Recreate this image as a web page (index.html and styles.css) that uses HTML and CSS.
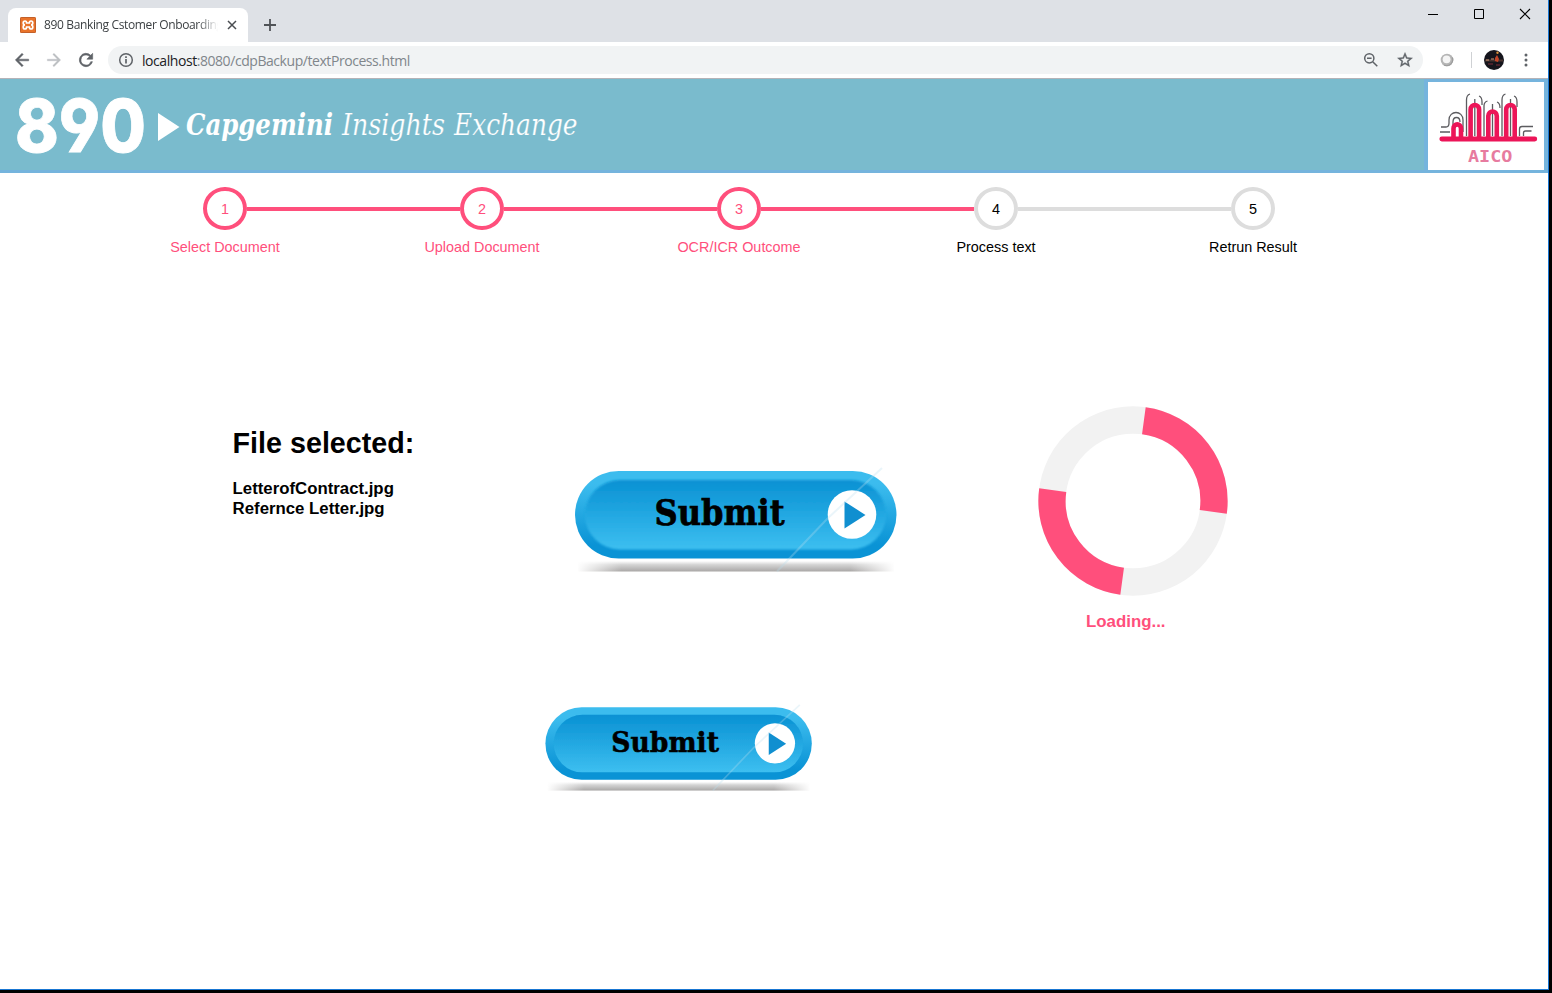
FILE: index.html
```html
<!DOCTYPE html>
<html lang="en">
<head>
<meta charset="utf-8">
<title>890 Banking Cstomer Onboarding</title>
<link rel="stylesheet" href="styles.css">
</head>
<body>
<svg class="defs" aria-hidden="true">
  <defs>
    <linearGradient id="rim" x1="0" y1="0" x2="0" y2="1"><stop offset="0" stop-color="#3cbcee"/><stop offset=".15" stop-color="#3cbcee"/><stop offset=".85" stop-color="#0a93d5"/><stop offset="1" stop-color="#0a93d5"/></linearGradient>
    <linearGradient id="face" x1="0" y1="0" x2="0" y2="1"><stop offset="0" stop-color="#0991d3"/><stop offset="1" stop-color="#3dbff0"/></linearGradient>
    <linearGradient id="shade" x1="0" y1="0" x2="0" y2="1"><stop offset="0" stop-color="#fff"/><stop offset=".35" stop-color="#d4d4d4"/><stop offset="1" stop-color="#a9a7a6"/></linearGradient>
    <linearGradient id="fade" x1="0" y1="0" x2="1" y2="0"><stop offset="0" stop-color="#fff"/><stop offset=".14" stop-color="#fff" stop-opacity="0"/><stop offset=".86" stop-color="#fff" stop-opacity="0"/><stop offset="1" stop-color="#fff"/></linearGradient>
    <filter id="soft" x="-5%" y="-10%" width="110%" height="120%"><feGaussianBlur stdDeviation=".9"/></filter>
    <symbol id="submit" viewBox="0 0 350 130">
      <rect x="18" y="106" width="316" height="10.500" fill="url(#shade)"/>
      <rect x="17" y="104" width="318" height="13" fill="url(#fade)"/>
      <rect x="15" y="16" width="321.500" height="87.500" rx="43.750" fill="url(#rim)"/>
      <rect x="25" y="25" width="301" height="69.500" rx="34.750" fill="url(#face)" filter="url(#soft)"/>
      <text x="94.500" y="69.800" class="submit-text" textLength="130" lengthAdjust="spacingAndGlyphs">Submit</text>
      <circle cx="292" cy="59.500" r="24.300" fill="#fff"/>
      <path d="M284.500 46.500v27l21-13.500z" fill="#108fd0"/>
      <path d="M217 116.500 267 64l55-51" fill="none" stroke="#b9dff0" stroke-width="2" opacity=".3"/>
    </symbol>
  </defs>
</svg>
<div class="window">
  <div class="tabstrip">
    <div class="tab">
      <svg class="favicon" viewBox="0 0 16 16"><rect width="16" height="16" rx="1.500" fill="#e9732a"/><rect x=".5" y=".5" width="15" height="15" rx="1" fill="none" stroke="#c2602a"/><path d="M5 7.900C2.600 7.900 2.600 4 5 4c1.300 0 1.600 1 1.600 2h2.800c0-1 .3-2 1.600-2 2.400 0 2.400 3.900 0 3.900 2.400 0 2.400 4.100 0 4.100-1.300 0-1.600-1-1.600-2H6.600c0 1-.3 2-1.600 2-2.400 0-2.400-4.100 0-4.100z" fill="none" stroke="#fff" stroke-width="1.700"/></svg>
      <span class="tab-title">890 Banking Cstomer Onboarding</span>
      <svg class="tab-close" viewBox="0 0 10 10"><path d="m1 1 8 8M9 1 1 9" stroke="#4a4d51" stroke-width="1.500"/></svg>
    </div>
    <svg class="new-tab" viewBox="0 0 12 12"><path d="M6 0v12M0 6h12" stroke="#505357" stroke-width="1.800"/></svg>
    <div class="controls">
      <svg viewBox="0 0 12 12"><path d="M1 6.500h10" stroke="#000"/></svg>
      <svg viewBox="0 0 12 12"><path d="M1.500 1.500h9v9h-9z" fill="none" stroke="#000"/></svg>
      <svg viewBox="0 0 12 12"><path d="m1 1 10 10M11 1 1 11" stroke="#000" stroke-width="1.100"/></svg>
    </div>
  </div>
  <div class="toolbar">
    <svg class="nav" viewBox="0 0 24 24"><path d="M20 11H7.830l5.590-5.590L12 4l-8 8 8 8 1.410-1.410L7.830 13H20z" fill="#5f6368" stroke="#5f6368" stroke-width=".6"/></svg>
    <svg class="nav" viewBox="0 0 24 24"><path d="m12 4-1.410 1.410L16.170 11H4v2h12.170l-5.580 5.590L12 20l8-8z" fill="#bcbfc2" stroke="#bcbfc2" stroke-width=".4"/></svg>
    <svg class="nav" viewBox="0 0 24 24"><path d="M17.650 6.350A8 8 0 1 0 19.730 14h-2.080A6 6 0 1 1 12 6c1.660 0 3.140.69 4.220 1.780L13 11h7V4z" fill="#5f6368" stroke="#5f6368" stroke-width=".7"/></svg>
    <div class="omnibox">
      <svg class="info" viewBox="0 0 16 16"><circle cx="8" cy="8" r="6.300" fill="none" stroke="#5f6368" stroke-width="1.500"/><path d="M8 7v4.500M8 4.200v1.700" stroke="#5f6368" stroke-width="1.700"/></svg>
      <span class="url"><b>localhost</b>:8080/cdpBackup/textProcess.html</span>
      <svg class="zoom" viewBox="0 0 16 16"><circle cx="6.300" cy="6.300" r="4.600" fill="none" stroke="#5f6368" stroke-width="1.500"/><path d="m9.700 9.700 4.600 4.600M4 6.300h4.600" stroke="#5f6368" stroke-width="1.500"/></svg>
      <svg class="star" viewBox="0 0 24 24"><path d="m22 9.240-7.190-.62L12 2 9.190 8.630 2 9.240l5.460 4.730L5.820 21 12 17.270 18.180 21l-1.630-7.030zM12 15.400l-3.760 2.270 1-4.280-3.320-2.880 4.380-.38L12 6.100l1.710 4.040 4.380.38-3.320 2.880 1 4.280z" fill="#5f6368" stroke="#5f6368" stroke-width=".5"/></svg>
    </div>
    <svg class="ext" viewBox="0 0 14 14"><circle cx="7" cy="7" r="6.300" fill="#b5b5b5"/><path d="M12.300 4.500A6 6 0 0 1 4 12" fill="none" stroke="#9c9c9c" stroke-width="1.200"/><circle cx="6.600" cy="6.300" r="3.900" fill="#f5f5f5"/></svg>
    <i class="divider"></i>
    <svg class="avatar" viewBox="0 0 20 20"><circle cx="10" cy="10" r="10" fill="#15151c"/><path d="M1 9.500h18v2H1z" fill="#4a3430"/><path d="M2 10h3m2-1h3" stroke="#d09a78"/><path d="m11 8 2-3 2 4-1 3-3-1z" fill="#c44427"/><circle cx="13.500" cy="2.700" r="1.200" fill="#d88f38"/><path d="M4 14h5m3 1h4" stroke="#5a2630" stroke-width="1.500"/></svg>
    <svg class="menu" viewBox="0 0 4 14"><g fill="#5f6368"><circle cx="2" cy="2" r="1.500"/><circle cx="2" cy="7" r="1.500"/><circle cx="2" cy="12" r="1.500"/></g></svg>
  </div>
  <header class="banner">
    <svg class="brand" viewBox="0 0 600 91">
      <g fill="#fff">
        <text x="15" y="73" class="brand-num" textLength="131" lengthAdjust="spacingAndGlyphs">890</text>
        <path d="M158 34v28l21.500-14z"/>
        <text x="186" y="56" class="brand-bold" textLength="147" lengthAdjust="spacingAndGlyphs">Capgemini</text>
        <text x="342" y="56" class="brand-light" textLength="103" lengthAdjust="spacingAndGlyphs">Insights</text>
        <text x="454" y="56" class="brand-light" textLength="123.500" lengthAdjust="spacingAndGlyphs">Exchange</text>
      </g>
    </svg>
    <div class="logo">
      <svg viewBox="0 0 116 88">
        <g fill="none" stroke="#5c5c60" stroke-width="1.300">
          <path d="M12 50h10M13 45h5q3 0 3-4v-3c0-10 14-10 14 0v12M25 43v-3c0-6 7-6 7 0"/>
          <path d="M38.500 54V18q0-5 3.500-6M46.800 54V17M51 14q3 1 3 6v3M56 54V24q0-4 3.500-5M64.500 54V22M69 20q3 1 3 6M74 54V18q0-5 3.500-6M82.500 54V17M86 14q3 1 3 6v5M91.500 54V47q0-2.500 2.500-2.500h11M95.500 54v-3q0-2 2-2h6"/>
        </g>
        <g fill="none" stroke="#ec1558" stroke-width="4.600">
          <path d="M13.800 57h93" stroke-linecap="round" stroke-width="4.800"/>
          <path d="M25.500 57V46.500c0-5.500 7.500-5.500 7.500 0V57M42.600 57V27.500c0-6 8.500-6 8.500 0V57M60.300 57V34c0-6 8.500-6 8.500 0v23M78.200 57V27.500c0-6 8.500-6 8.500 0V57"/>
        </g>
        <text x="40" y="80" class="logo-text" textLength="44.500" lengthAdjust="spacingAndGlyphs">AICO</text>
      </svg>
    </div>
  </header>
  <main>
    <ol class="steps">
      <li class="done"><span>1</span><em>Select Document</em></li>
      <li class="done"><span>2</span><em>Upload Document</em></li>
      <li class="done"><span>3</span><em>OCR/ICR Outcome</em></li>
      <li><span>4</span><em>Process text</em></li>
      <li><span>5</span><em>Retrun Result</em></li>
    </ol>
    <section class="work">
      <div class="files">
        <h1>File selected:</h1>
        <p>LetterofContract.jpg</p>
        <p>Refernce Letter.jpg</p>
      </div>
      <svg class="submit-large" role="button" aria-label="Submit"><use href="#submit"/></svg>
      <div class="loader">
        <svg viewBox="0 0 190 190"><g fill="none" stroke-width="27.300"><circle cx="95" cy="95" r="81" stroke="#f2f2f2"/><circle cx="95" cy="95" r="81" stroke="#ff4f7c" pathLength="4" stroke-dasharray="1" transform="rotate(-82.300 95 95)"/></g></svg>
        <p>Loading...</p>
      </div>
    </section>
    <svg class="submit-small" role="button" aria-label="Submit"><use href="#submit"/></svg>
  </main>
</div>
</body>
</html>
```
FILE: styles.css
```css
* { box-sizing: border-box; }
body { margin: 0; height: 993px; overflow: hidden; background: #000; font-family: "Liberation Sans", Arial, sans-serif; }
svg { display: block; flex: none; }
.defs { width: 0; height: 0; position: absolute; }
.window { width: 1549px; height: 990px; background: #fff; border-right: 1px solid #1976d2; border-bottom: 1px solid #1976d2; }

.tabstrip { height: 42px; background: #dee1e6; display: flex; padding: 8px 0 0 8px; }
.tab { width: 240px; height: 34px; background: #fff; border-radius: 8px 8px 0 0; display: flex; align-items: center; padding-left: 12px; }
.favicon { width: 16px; height: 16px; }
.tab-title { width: 174px; margin: -2px 0 0 8px; white-space: nowrap; font: 12px "Open Sans", sans-serif; letter-spacing: -.36px; color: #3c4043; -webkit-mask-image: linear-gradient(90deg, #000 88%, transparent); mask-image: linear-gradient(90deg, #000 88%, transparent); }
.tab-close { width: 10px; height: 10px; margin-left: 9px; }
.new-tab { width: 12px; height: 12px; margin: 11px 0 0 16px; }
.controls { margin-left: auto; display: flex; gap: 34px; padding-right: 17px; }
.controls svg { width: 12px; height: 12px; }

.toolbar { height: 37px; border-bottom: 1px solid #b5b3b8; display: flex; align-items: center; padding-left: 12px; }
.nav { width: 20px; height: 20px; margin-right: 12px; }
.omnibox { width: 1315px; height: 28px; border-radius: 14px; background: #f1f3f4; display: flex; align-items: center; padding-left: 10px; }
.info { width: 16px; height: 16px; }
.url { margin-left: 8px; font: 14px "Open Sans", sans-serif; letter-spacing: -.44px; color: #80868b; white-space: nowrap; }
.url b { font-weight: 400; color: #202124; }
.zoom { width: 16px; height: 16px; margin-left: auto; }
.star { width: 18px; height: 18px; margin: 0 9px 0 17px; }
.ext { width: 14px; height: 14px; margin-left: 17px; }
.divider { width: 1px; height: 16px; background: #cfd1d4; margin: 0 12px 0 17px; }
.avatar { width: 20px; height: 20px; }
.menu { width: 4px; height: 14px; margin-left: 20px; }

.banner { height: 94px; display: flex; align-items: flex-start; background: linear-gradient(#7abbcd, #7abbcd) 0 0 / 1424px 91px no-repeat #75b4dd; }
.brand { width: 600px; height: 91px; }
.brand-num { font: 800 73px Inter, sans-serif; font-feature-settings: "cv04"; stroke: #fff; stroke-width: .8px; }
.brand-bold { font: italic 700 29px "DejaVu Serif Condensed", "DejaVu Serif", serif; }
.brand-light { font: italic 400 29px "DejaVu Serif Condensed", "DejaVu Serif", serif; stroke: #7abbcd; stroke-width: .2px; }
.logo { width: 116px; height: 88px; margin: 3px 4px 0 auto; background: #fff; }
.logo-text { font: 700 15px "DejaVu Sans Mono", monospace; fill: #e77b9f; }

.steps { list-style: none; margin: 0; padding: 14px 0 0 96.5px; display: flex; font-size: 14.4px; line-height: 17px; }
.steps li { width: 257px; display: grid; grid-template-columns: 1fr 43.5px 1fr; row-gap: 9px; text-align: center; align-items: center; color: #000; }
.steps li::before, .steps li::after { content: ""; height: 4px; background: #ddd; grid-row: 1; }
.steps li::before { grid-column: 1; }
.steps li::after { grid-column: 3; }
.steps span { grid-column: 2; grid-row: 1; height: 43.2px; border: 4px solid #ddd; border-radius: 50%; line-height: 36px; }
.steps em { grid-column: 1 / -1; grid-row: 2; font-style: normal; }
.steps .done { color: #ff4f7c; }
.steps .done span { border-color: #ff4f7c; }
.steps .done::before, .steps .done::after, .steps .done + li::before { background: #ff4f7c; }
.steps li:first-child::before, .steps li:last-child::after { visibility: hidden; }

.work { display: flex; align-items: flex-start; margin-top: 149.8px; font-weight: 700; }
.files { width: 327px; margin: 21px 0 0 232.6px; font-size: 16.8px; line-height: 20px; }
.files h1 { font-size: 28.7px; line-height: 33px; margin: 0 0 19px; }
.files p, .loader p { margin: 0; }
.submit-large { width: 350px; height: 130px; margin-top: 49px; }
.submit-text { font: 700 34.5px "DejaVu Serif", serif; fill: #000; stroke: #000; stroke-width: .7px; }
.loader { margin-left: 128px; color: #ff4f7c; font-size: 16.85px; line-height: 20px; }
.loader svg { width: 190px; height: 190px; }
.loader p { margin: 16px 0 0 48.4px; }
.submit-small { width: 290px; height: 107.8px; margin: 62px 0 0 533px; }
```
